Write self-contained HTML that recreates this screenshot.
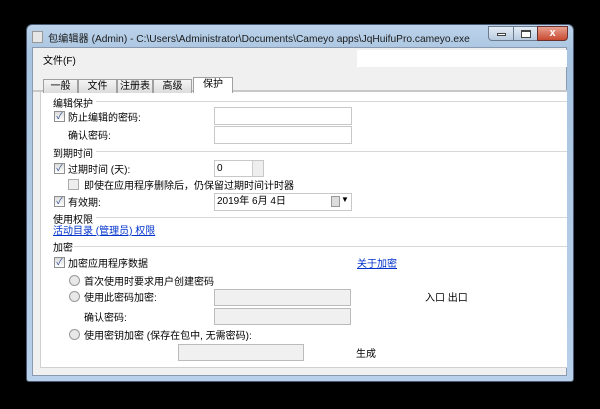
<!DOCTYPE html><html><head><meta charset="utf-8"><style>
*{margin:0;padding:0;box-sizing:border-box}
body{width:600px;height:409px;background:#000;position:relative;overflow:hidden;font-family:"Liberation Sans","Noto Sans CJK SC",sans-serif;font-size:10px;color:#000}
.a{position:absolute;white-space:nowrap}
.cb{position:absolute;width:11px;height:11px;border:1px solid #8e8f8f;background:linear-gradient(#dcdcdc,#fff);font-size:9px;line-height:9px;text-align:center;color:#2a4a8a}
.rb{position:absolute;width:11px;height:11px;border:1px solid #999;border-radius:50%;background:#e8e8e8}
.in{position:absolute;height:18px;border:1px solid #c8c8c8;background:#fff}
.dis{background:#f0f0f0;border-color:#bbb}
.gl{position:absolute;height:1px;background:#d8d8d8}
.tab{position:absolute;top:79px;height:14px;border:1px solid #a0a0a0;border-bottom:none;background:linear-gradient(#f4f4f4,#dcdcdc);text-align:center;line-height:13px}
a{color:#0033cc;text-decoration:underline}
</style></head><body>
<div class="a" style="left:26px;top:24px;width:548px;height:358px;border-radius:6px 6px 3px 3px;background:linear-gradient(#bcd3ea,#a9c4e0 30px,#b8d0ea);border:1px solid #4a5a70"></div>
<div class="a" style="left:32px;top:31px;width:11px;height:12px;background:#e6e6e6;border:1px solid #999"></div>
<div class="a" style="left:48px;top:30px;font-size:10.2px;color:#1a1a1a">包编辑器 (Admin) - C:\Users\Administrator\Documents\Cameyo apps\JqHuifuPro.cameyo.exe</div>
<div class="a" style="left:488px;top:26px;width:26px;height:15px;border:1px solid #6b7b90;border-radius:0 0 0 4px;background:linear-gradient(#e4ecf5,#b9cbe0)"><div class="a" style="left:8px;top:6px;width:9px;height:3px;border:1px solid #444;background:#fff"></div></div>
<div class="a" style="left:513px;top:26px;width:25px;height:15px;border:1px solid #6b7b90;background:linear-gradient(#e4ecf5,#b9cbe0)"><div class="a" style="left:7px;top:3px;width:10px;height:8px;border:1px solid #444;border-top-width:2px;background:#fff"></div></div>
<div class="a" style="left:537px;top:26px;width:31px;height:15px;border:1px solid #6b3030;border-radius:0 0 4px 0;background:linear-gradient(#e8a090,#c84a30);color:#fff;font-weight:bold;text-align:center;line-height:13px;font-size:11px">x</div>
<div class="a" style="left:32px;top:47px;width:535px;height:329px;background:#f0f0f0;border:1px solid #8a9ab0"></div>
<div class="a" style="left:357px;top:50px;width:210px;height:17px;background:#fff"></div>
<div class="a" style="left:43px;top:52px">文件(F)</div>
<div class="a" style="left:33px;top:90px;width:534px;height:2px;background:#c8c8c8"></div>
<div class="a" style="left:40px;top:92px;width:527px;height:276px;background:#fff;border-left:1px solid #d0d0d0;border-bottom:1px solid #d0d0d0"></div>
<div class="tab" style="left:43px;width:35px">一般</div>
<div class="tab" style="left:78px;width:39px">文件</div>
<div class="tab" style="left:117px;width:36px">注册表</div>
<div class="tab" style="left:153px;width:39px">高级</div>
<div class="tab" style="left:193px;top:77px;height:16px;width:40px;background:#fff">保护</div>
<div class="a" style="left:53px;top:95px">编辑保护</div><div class="gl" style="left:96px;top:101px;width:471px"></div>
<div class="cb" style="left:54px;top:111px">✓</div><div class="a" style="left:68px;top:109px">防止编辑的密码:</div>
<div class="in" style="left:214px;top:107px;width:138px"></div>
<div class="a" style="left:68px;top:127px">确认密码:</div>
<div class="in" style="left:214px;top:126px;width:138px"></div>
<div class="a" style="left:53px;top:145px">到期时间</div><div class="gl" style="left:96px;top:151px;width:471px"></div>
<div class="cb" style="left:54px;top:163px">✓</div><div class="a" style="left:68px;top:161px">过期时间 (天):</div>
<div class="in" style="left:214px;top:160px;width:50px;height:17px;padding-left:2px;line-height:15px">0</div>
<div class="a" style="left:252px;top:161px;width:11px;height:15px;border-left:1px solid #ccc;background:#eee"></div>
<div class="cb" style="left:68px;top:179px;background:#eee;border-color:#aaa"></div><div class="a" style="left:84px;top:177px">即使在应用程序删除后，仍保留过期时间计时器</div>
<div class="cb" style="left:54px;top:196px">✓</div><div class="a" style="left:68px;top:194px">有效期:</div>
<div class="in" style="left:214px;top:193px;width:138px;padding-left:2px;line-height:16px">2019年 6月 4日</div>
<div class="a" style="left:331px;top:196px;width:9px;height:11px;border:1px solid #999;background:#ddd"></div><div class="a" style="left:341px;top:195px;font-size:8px">▼</div>
<div class="a" style="left:53px;top:211px">使用权限</div><div class="gl" style="left:96px;top:217px;width:471px"></div>
<div class="a" style="left:53px;top:222px"><a>活动目录 (管理员) 权限</a></div>
<div class="a" style="left:53px;top:239px">加密</div><div class="gl" style="left:74px;top:246px;width:493px"></div>
<div class="cb" style="left:54px;top:257px">✓</div><div class="a" style="left:68px;top:255px">加密应用程序数据</div>
<div class="a" style="left:357px;top:255px"><a>关于加密</a></div>
<div class="rb" style="left:69px;top:275px"></div><div class="a" style="left:84px;top:273px">首次使用时要求用户创建密码</div>
<div class="rb" style="left:69px;top:291px"></div><div class="a" style="left:84px;top:289px">使用此密码加密:</div>
<div class="in dis" style="left:214px;top:289px;width:137px;height:17px"></div>
<div class="a" style="left:425px;top:289px">入口 出口</div>
<div class="a" style="left:84px;top:309px">确认密码:</div>
<div class="in dis" style="left:214px;top:308px;width:137px;height:17px"></div>
<div class="rb" style="left:69px;top:329px"></div><div class="a" style="left:84px;top:327px">使用密钥加密 (保存在包中, 无需密码):</div>
<div class="in dis" style="left:178px;top:344px;width:126px;height:17px"></div>
<div class="a" style="left:356px;top:345px">生成</div>
</body></html>
